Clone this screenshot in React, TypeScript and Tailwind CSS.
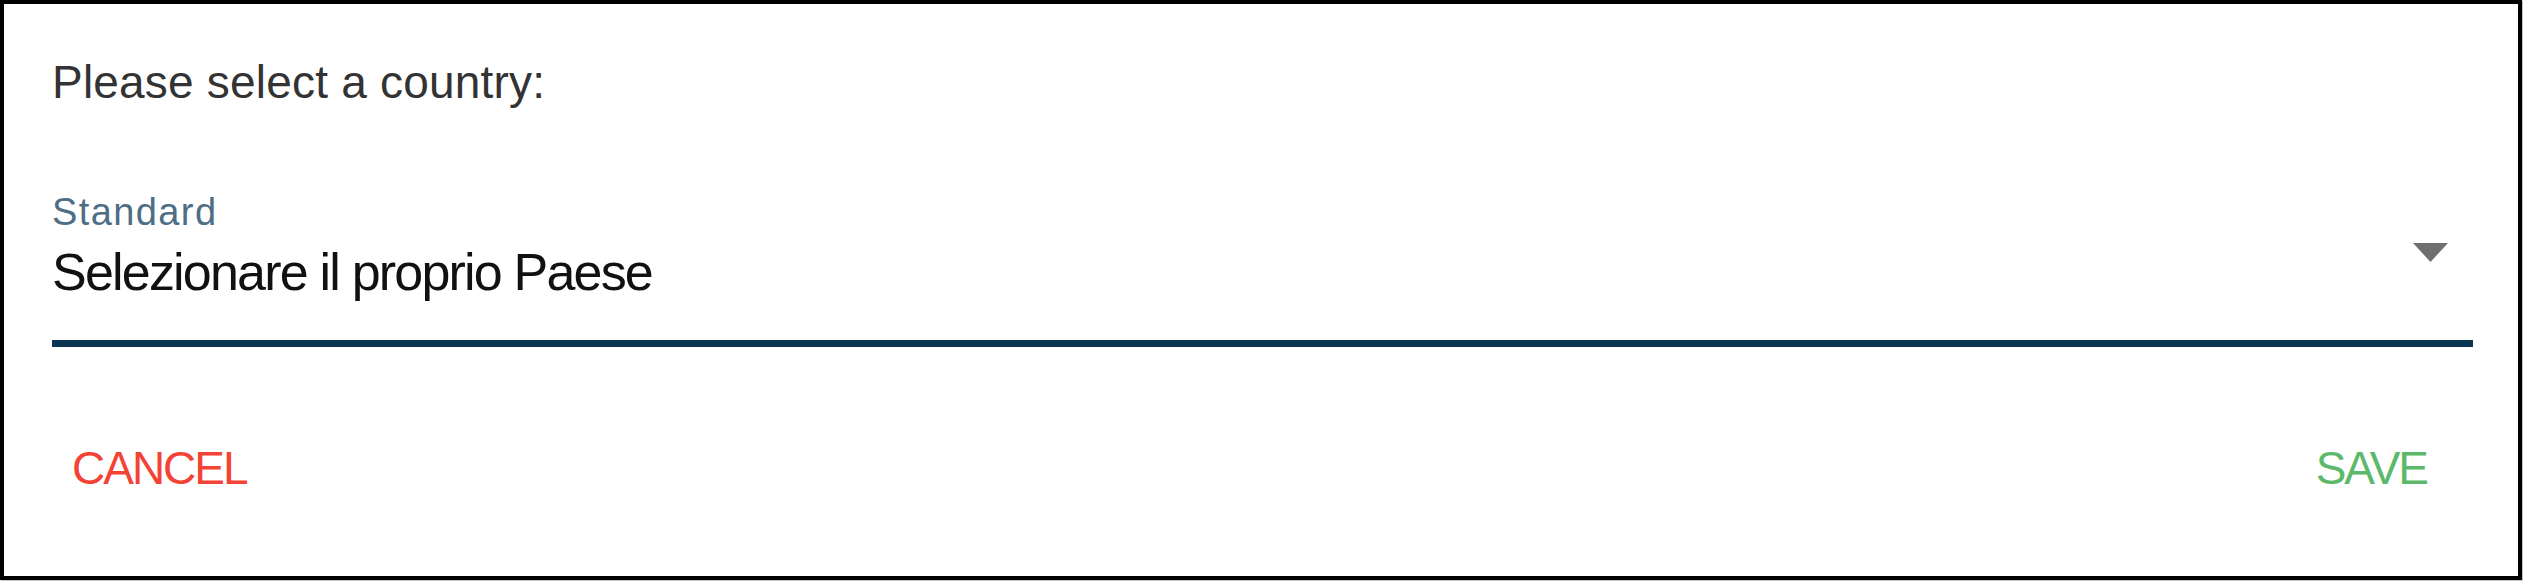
import React from "react";

const CountryDialog = () => {
	return (
		<div className="w-[2522px] h-[580px] border-[4px] border-black bg-white shadow-[1px_1px_0_#c4c4c4] flex flex-col pl-[48px] pr-[45px] pt-[55px] font-['Liberation_Sans',Arial,sans-serif]">
			<h2 className="text-[46px] leading-none text-[#333333] tracking-[0.2px]">
				Please select a country:
			</h2>

			<div className="mt-[88px]">
				<label className="block text-[38px] leading-none tracking-[1.4px] text-[#4e6e86]">
					Standard
				</label>
				<div className="mt-[15px] flex items-start justify-between pr-[25px]">
					<span className="text-[52px] leading-none tracking-[-1.8px] text-[#111111]">
						Selezionare il proprio Paese
					</span>
					<svg width="35" height="19" viewBox="0 0 35 19" className="-mt-[3px]">
						<polygon points="0,0 35,0 17.5,19" fill="#6f6f6f" />
					</svg>
				</div>
				<div className="mt-[42px] h-[7px] bg-[#0b3652]" />
			</div>

			<div className="mt-[98px] flex justify-between pl-[20px] pr-[46px]">
				<button className="text-[46px] leading-none tracking-[-2px] text-[#f44336]">
					CANCEL
				</button>
				<button className="text-[46px] leading-none tracking-[-2px] text-[#5cb96b]">
					SAVE
				</button>
			</div>
		</div>
	);
};

export default function App() {
	return (
		<div className="min-h-[581px] bg-white">
			<CountryDialog />
		</div>
	);
}
